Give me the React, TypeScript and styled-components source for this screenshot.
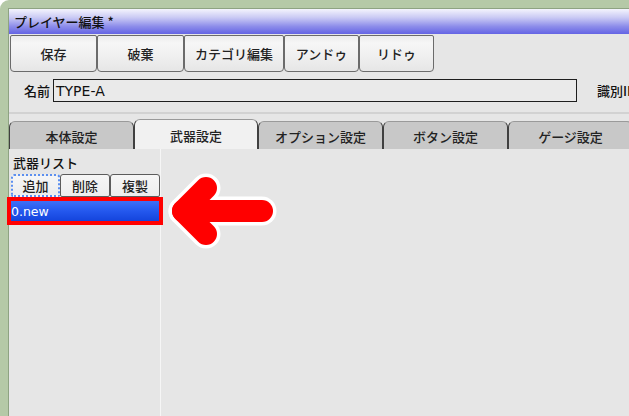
import React from 'react';
import styled, { createGlobalStyle } from 'styled-components';

const Global = createGlobalStyle`
  html, body { margin: 0; padding: 0; background: #ffffff; overflow: hidden; }
  body { width: 629px; height: 416px; }
  * { box-sizing: border-box; }
`;

const jp = `"Noto Sans CJK JP", "DejaVu Sans", sans-serif`;

const Frame = styled.div`
  position: relative;
  width: 629px;
  height: 416px;
  overflow: hidden;
  background: #b5c9a7;
  border-top-left-radius: 9px;
  padding: 8px 0 0 8px;
`;

const Window = styled.div`
  width: 700px;
  height: 100%;
  background: #e6e6e6;
  border-left: 1px solid #8ea382;
  border-top: 1px solid #8ea382;
  display: flex;
  flex-direction: column;
  font-family: ${jp};
  color: #111;
`;

const TitleBar = styled.div`
  height: 25px;
  display: flex;
  align-items: center;
  padding-left: 5px;
  font-size: 13px;
  font-weight: 500;
  background: linear-gradient(to bottom, #f4f4fd 0%, #c9c9f4 35%, #8c8cea 70%, #6464e4 100%);
`;

const Toolbar = styled.div`
  display: flex;
  padding: 1px 0 0 1px;
`;

const ToolButton = styled.button<{ $w: number }>`
  width: ${(p) => p.$w}px;
  height: 37px;
  margin: 0;
  padding: 0;
  font-family: ${jp};
  font-size: 13px;
  font-weight: 500;
  color: #222;
  border: 1px solid #6b6b6b;
  border-radius: 2px 2px 4px 4px;
  background: linear-gradient(to bottom, #ececec 0%, #f6f6f6 20%, #efefef 60%, #e6e6e6 100%);
`;

const NameRow = styled.div`
  display: flex;
  align-items: center;
  height: 23px;
  margin-top: 7px;
  padding-left: 15px;
  font-size: 13px;
  font-weight: 500;
  white-space: nowrap;
`;

const NameField = styled.div`
  width: 524px;
  height: 23px;
  margin-left: 3px;
  border: 1px solid #1e1e1e;
  background: #eaeaea;
  padding-left: 2px;
  display: flex;
  align-items: center;
  font-family: "DejaVu Sans", sans-serif;
  font-weight: 400;
  font-size: 14px;
  color: #111;
`;

const IdLabel = styled.span`
  margin-left: 20px;
`;

const TabStrip = styled.div`
  margin-top: 10px;
  border-top: 2px solid #d2d2d2;
  padding-top: 5px;
  display: flex;
  align-items: flex-end;
  height: 37px;
`;

const Tab = styled.div<{ $active?: boolean; $w: number }>`
  width: ${(p) => p.$w}px;
  height: ${(p) => (p.$active ? 30 : 28)}px;
  flex: none;
  display: flex;
  align-items: center;
  justify-content: center;
  font-size: 13px;
  font-weight: 500;
  color: #222;
  background: ${(p) => (p.$active ? '#f1f1f1' : '#c8c8c8')};
  border: 1px solid #404040;
  border-top-color: #9a9a9a;
  border-bottom: none;
  border-radius: 6px 6px 0 0;
  padding-top: 2px;
`;

const Body = styled.div`
  flex: 1;
  display: flex;
`;

const LeftPanel = styled.div`
  width: 152px;
  border-right: 1px solid #f6f6f6;
  padding: 1px 0 0 2px;
  display: flex;
  flex-direction: column;
`;

const ListLabel = styled.div`
  height: 24px;
  padding-left: 2px;
  display: flex;
  align-items: center;
  font-size: 13px;
  font-weight: 500;
`;

const SmallButtons = styled.div`
  display: flex;
`;

const SmallButton = styled.button<{ $w: number; $focus?: boolean }>`
  width: ${(p) => p.$w}px;
  height: 23px;
  margin: 0;
  padding: 0;
  font-family: ${jp};
  font-size: 13px;
  font-weight: 500;
  color: #222;
  background: linear-gradient(to bottom, #f6f6f6 0%, #ededed 100%);
  border: ${(p) => (p.$focus ? '2px dotted #5c8ff0' : '1px solid #5c5c5c')};
  border-radius: 3px 3px 2px 2px;
`;

const ListItem = styled.div`
  width: 148px;
  height: 20px;
  margin-top: 4px;
  background: linear-gradient(to bottom, #3f70f6 0%, #2458ee 50%, #1444dc 100%);
  outline: 4px solid #ff0000;
  color: #ffffff;
  font-family: "DejaVu Sans", sans-serif;
  font-size: 12.5px;
  display: flex;
  align-items: center;
`;

const Arrow = styled.svg`
  position: absolute;
  left: 160px;
  top: 165px;
  width: 120px;
  height: 95px;
`;

export default function App() {
  return (
    <Frame>
      <Global />
      <Window>
        <TitleBar>プレイヤー編集 *</TitleBar>
        <Toolbar>
          <ToolButton $w={87}>保存</ToolButton>
          <ToolButton $w={87}>破棄</ToolButton>
          <ToolButton $w={100}>カテゴリ編集</ToolButton>
          <ToolButton $w={75}>アンドゥ</ToolButton>
          <ToolButton $w={75}>リドゥ</ToolButton>
        </Toolbar>
        <NameRow>
          名前
          <NameField>TYPE-A</NameField>
          <IdLabel>識別ID</IdLabel>
        </NameRow>
        <TabStrip>
          <Tab $w={125}>本体設定</Tab>
          <Tab $w={124} $active>武器設定</Tab>
          <Tab $w={125}>オプション設定</Tab>
          <Tab $w={125}>ボタン設定</Tab>
          <Tab $w={125}>ゲージ設定</Tab>
        </TabStrip>
        <Body>
          <LeftPanel>
            <ListLabel>武器リスト</ListLabel>
            <SmallButtons>
              <SmallButton $w={49} $focus>追加</SmallButton>
              <SmallButton $w={50}>削除</SmallButton>
              <SmallButton $w={50}>複製</SmallButton>
            </SmallButtons>
            <ListItem>0.new</ListItem>
          </LeftPanel>
        </Body>
      </Window>
      <Arrow viewBox="0 0 120 95">
        <g fill="none" strokeLinecap="round" strokeLinejoin="round">
          <polyline points="46,23 23,46 46,69" stroke="#ffffff" strokeWidth="29" />
          <line x1="23" y1="46" x2="102" y2="46" stroke="#ffffff" strokeWidth="29" />
          <polyline points="46,23 23,46 46,69" stroke="#ff0000" strokeWidth="22" />
          <line x1="23" y1="46" x2="102" y2="46" stroke="#ff0000" strokeWidth="22" />
        </g>
      </Arrow>
    </Frame>
  );
}
